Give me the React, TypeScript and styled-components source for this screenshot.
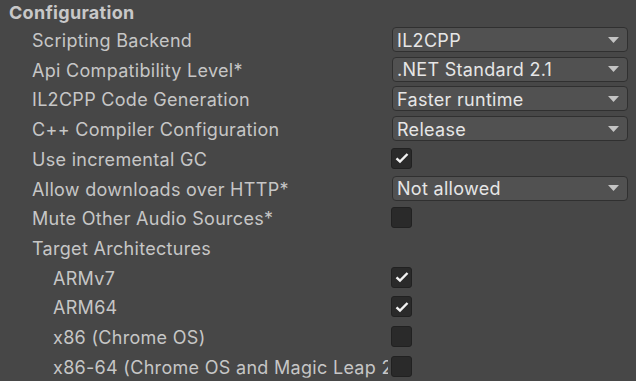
import React from "react";
import styled, { createGlobalStyle } from "styled-components";

const Global = createGlobalStyle`
  html, body {
    margin: 0;
    padding: 0;
    background: #474747;
    overflow: hidden;
  }
`;

const Root = styled.div({
  width: "636px",
  height: "381px",
  background: "#474747",
  fontFamily: "Inter, 'Noto Sans', sans-serif",
  fontSize: "18px",
  letterSpacing: "0.3px",
  color: "#c6c6c6",
  display: "flex",
  flexDirection: "column",
});

const Header = styled.div({
  height: "25px",
  display: "flex",
  alignItems: "center",
  paddingLeft: "9px",
  fontWeight: 700,
  color: "#c8c8c8",
  paddingTop: "1px",
  boxSizing: "border-box",
});

const Row = styled.div({
  height: "30px",
  display: "flex",
  alignItems: "center",
  paddingRight: "8px",
});

const Label = styled.div<{ $indent: number }>(({ $indent }) => ({
  width: "391px",
  boxSizing: "border-box",
  paddingLeft: `${$indent}px`,
  paddingTop: "2px",
  whiteSpace: "nowrap",
  overflow: "hidden",
  clipPath: "inset(0 3px 0 0)",
}));

const Dropdown = styled.div({
  flex: 1,
  height: "25px",
  boxSizing: "border-box",
  marginLeft: "1px",
  background: "#515151",
  border: "1px solid #303030",
  borderRadius: "4px",
  display: "flex",
  alignItems: "center",
  justifyContent: "space-between",
  paddingLeft: "4px",
  paddingRight: "8px",
  color: "#e6e6e6",
  span: {
    whiteSpace: "nowrap",
    paddingTop: "1px",
  },
});

const Box = styled.div({
  width: "21px",
  height: "21px",
  boxSizing: "border-box",
  background: "#2a2a2a",
  border: "1px solid #212121",
  borderRadius: "3px",
  display: "flex",
  alignItems: "center",
  justifyContent: "center",
});

function Arrow() {
  return (
    <svg width="11" height="6" viewBox="0 0 11 6">
      <path d="M0 0 H11 L5.5 6 Z" fill="#c4c4c4" />
    </svg>
  );
}

function Check({ on }: { on: boolean }) {
  return (
    <Box>
      {on && (
        <svg width="14" height="12" viewBox="0 0 14 12">
          <path d="M1.5 6.3 L5 9.6 L12.5 2" fill="none" stroke="#f2f2f2" strokeWidth="2.4" />
        </svg>
      )}
    </Box>
  );
}

type Item =
  | { label: string; indent: number; kind: "drop"; value: string }
  | { label: string; indent: number; kind: "check"; on: boolean }
  | { label: string; indent: number; kind: "none" };

const items: Item[] = [
  { label: "Scripting Backend", indent: 32, kind: "drop", value: "IL2CPP" },
  { label: "Api Compatibility Level*", indent: 32, kind: "drop", value: ".NET Standard 2.1" },
  { label: "IL2CPP Code Generation", indent: 32, kind: "drop", value: "Faster runtime" },
  { label: "C++ Compiler Configuration", indent: 32, kind: "drop", value: "Release" },
  { label: "Use incremental GC", indent: 32, kind: "check", on: true },
  { label: "Allow downloads over HTTP*", indent: 32, kind: "drop", value: "Not allowed" },
  { label: "Mute Other Audio Sources*", indent: 32, kind: "check", on: false },
  { label: "Target Architectures", indent: 32, kind: "none" },
  { label: "ARMv7", indent: 53, kind: "check", on: true },
  { label: "ARM64", indent: 53, kind: "check", on: true },
  { label: "x86 (Chrome OS)", indent: 53, kind: "check", on: false },
  { label: "x86-64 (Chrome OS and Magic Leap 2)", indent: 53, kind: "check", on: false },
];

export default function App() {
  return (
    <>
      <Global />
      <Root>
        <Header>Configuration</Header>
        {items.map((it) => (
          <Row key={it.label}>
            <Label $indent={it.indent}>{it.label}</Label>
            {it.kind === "drop" && (
              <Dropdown>
                <span>{it.value}</span>
                <Arrow />
              </Dropdown>
            )}
            {it.kind === "check" && <Check on={it.on} />}
          </Row>
        ))}
      </Root>
    </>
  );
}
